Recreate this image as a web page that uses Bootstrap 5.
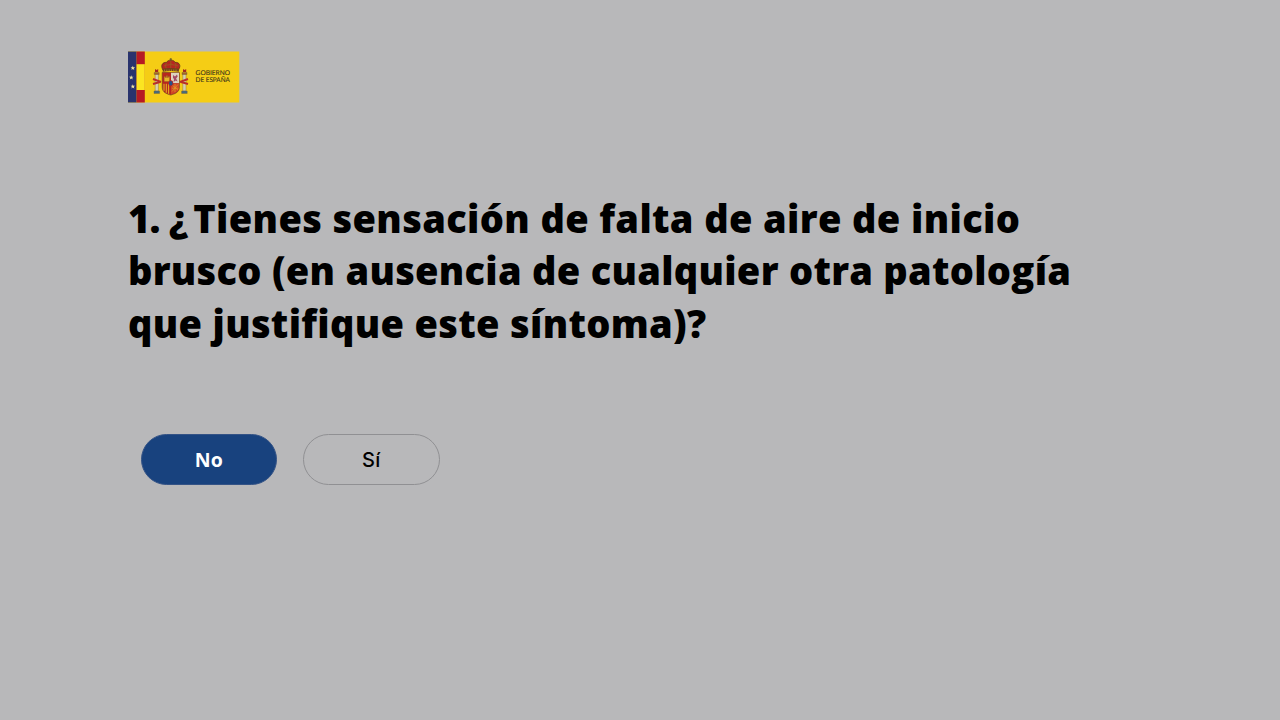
<!DOCTYPE html>
<html lang="es">
<head>
<meta charset="utf-8">
<meta name="viewport" content="width=device-width, initial-scale=1">
<title>Autoevaluación</title>
<link href="https://cdn.jsdelivr.net/npm/bootstrap@5.3.0/dist/css/bootstrap.min.css" rel="stylesheet">
<style>
body{background:#b8b8ba;color:#000;font-family:"Open Sans","Noto Sans",sans-serif}
.survey{padding:51px 128px 0}
.brand-logo{width:112px;height:52px}
.question{font-size:38px;line-height:52.67px;font-weight:800;margin:88.5px 0 0;white-space:nowrap}
.question .l1{letter-spacing:.36px}
.question .number{letter-spacing:-.7px}
.question .opening{letter-spacing:5px}
.question .l2{letter-spacing:.28px}
.question .l3{letter-spacing:.31px}
.answers{margin:84.5px 0 0 12.5px;gap:26px}
.answer{width:136.6px;height:51.4px;font-size:19.5px;line-height:1;color:#000;border:1px solid #909093;font-weight:500}
.answer.chosen{background:#18427e;border-color:#345386;color:#fff;font-weight:700}
.answer.plain{font-family:Inter,sans-serif;font-size:20px;letter-spacing:.4px}
</style>
</head>
<body>
<main class="survey">
<header class="d-flex">
<svg class="brand-logo d-block" viewBox="0 0 112 52" role="img" aria-label="Gobierno de España">
<rect y=".5" width="111.3" height="51" fill="#f5cd15"/>
<rect y=".5" width="8.6" height="51" fill="#29336d"/>
<rect x="8.6" y=".5" width="8.2" height="51" fill="#b61a23"/>
<rect x="8.6" y="13.2" width="8.2" height="25.8" fill="#fbe521"/>
<g fill="#eee3a0">
<path id="star" d="M4.8 14.8l.6 1.5 1.7.1-1.3 1 .5 1.6-1.5-.9-1.4.9.5-1.6-1.3-1 1.6-.1z"/>
<use href="#star" x="-1.6" y="9.4"/><use href="#star" y="18.4"/>
</g>
<!-- Pillars -->
<g stroke="#76613b" stroke-width=".4">
<path d="M27.2 23h3.2v17h-3.2zM54.8 23H58v17h-3.2z" fill="#d9d1ab"/>
<path d="M26 40h5.6v2.5H26zM53.6 40h5.6v2.5h-5.6z" fill="#456b7e"/>
<path d="M26.2 21.5h5v2h-5zM54 21.5h5v2h-5z" fill="#a46429"/>
</g>
<path d="M27 21v-3l1.6 1 1.6-1v3zM55 21v-3l1.6 1 1.6-1v3z" fill="#a32a20"/>
<path d="M25 28l8 3M25 33l7-2M52 31l8-3M53 31l7 2" stroke="#b92f29" stroke-width="1.9"/>
<!-- Crown -->
<path d="M35 19c-3-5 0-8 3.6-7.6 1-3 7.6-3 8.4 0 4-.5 6.6 3 3.4 7.6z" fill="#b72620" stroke="#5b3918" stroke-width=".8"/>
<path d="M38.6 18c-1.7-3-1-5 0-6M47 18c1.7-3 1-5 0-6M42.8 10v8M36 15c3-2 4 0 7-2 3 2 4 0 7 2" fill="none" stroke="#96621f" stroke-width=".8"/>
<path d="M42.8 7v3M41.6 8.2H44" stroke="#60502b" stroke-width=".8"/>
<path d="M34.7 17.7q8-1.5 16.2 0v3q-8-1.4-16.2 0z" fill="#70421a"/>
<path d="M36 19.2h13.4" stroke="#d3aa37" stroke-width=".8" stroke-dasharray="1.1 1.2"/>
<!-- Shield -->
<path d="M34.2 21.5h17.2V36c0 5.5-5 7-8.6 8-3.8-1-8.6-2.5-8.6-8z" fill="#b8261f" stroke="#745021" stroke-width=".7"/>
<path d="M43 21.8h8v10.4h-8z" fill="#ddd2c0"/>
<path d="M45 24l2 1.5 2-2 .7 2-1.6 2 1.5 3-2-1-2 1.5.4-3-1-1z" fill="#a34a65"/>
<path d="M34.8 21.8h8.2v10.4h-8.2z" fill="#b8261f"/>
<path d="M36.2 30.5v-5h1.2v1h1v-2h1v2h1v-1h1.2v5z" fill="#e5b32a" stroke="#755524" stroke-width=".3"/>
<path d="M36 32.7v7M38.3 32.7v9M40.6 32.7v10" stroke="#e2b020" stroke-width="1.1"/>
<path d="M43 32.5h8V36c0 4-3 5.9-8 7.3z" fill="#cf4825"/>
<path d="M44 34l6 5M50 33.5l-6 7M44 37.2h6.4M47 33v8" stroke="#e5a025" stroke-width=".7"/>
<ellipse cx="42.8" cy="32.3" rx="2.4" ry="3" fill="#b52a26"/>
<ellipse cx="42.8" cy="32.3" rx="1.7" ry="2.3" fill="#27508a"/>
<g font-family="Lato" font-size="6.6" fill="#403719" stroke="#403719" stroke-width=".12" text-rendering="geometricPrecision">
<text x="67.6" y="23.7" textLength="34.4" lengthAdjust="spacingAndGlyphs">GOBIERNO</text>
<text x="67.6" y="31.2" textLength="34.2" lengthAdjust="spacingAndGlyphs">DE ESPAÑA</text>
</g>
</svg>
</header>
<h1 class="question"><span class="l1"><span class="number">1. </span><span class="opening">¿</span>Tienes sensación de falta de aire de inicio</span><br><span class="l2">brusco (en ausencia de cualquier otra patología</span><br><span class="l3">que justifique este síntoma)?</span></h1>
<div class="answers d-flex">
<button type="button" class="answer chosen btn rounded-pill p-0">No</button>
<button type="button" class="answer plain btn rounded-pill p-0">Sí</button>
</div>
</main>
<script src="https://cdn.jsdelivr.net/npm/bootstrap@5.3.0/dist/js/bootstrap.bundle.min.js"></script>
</body>
</html>
